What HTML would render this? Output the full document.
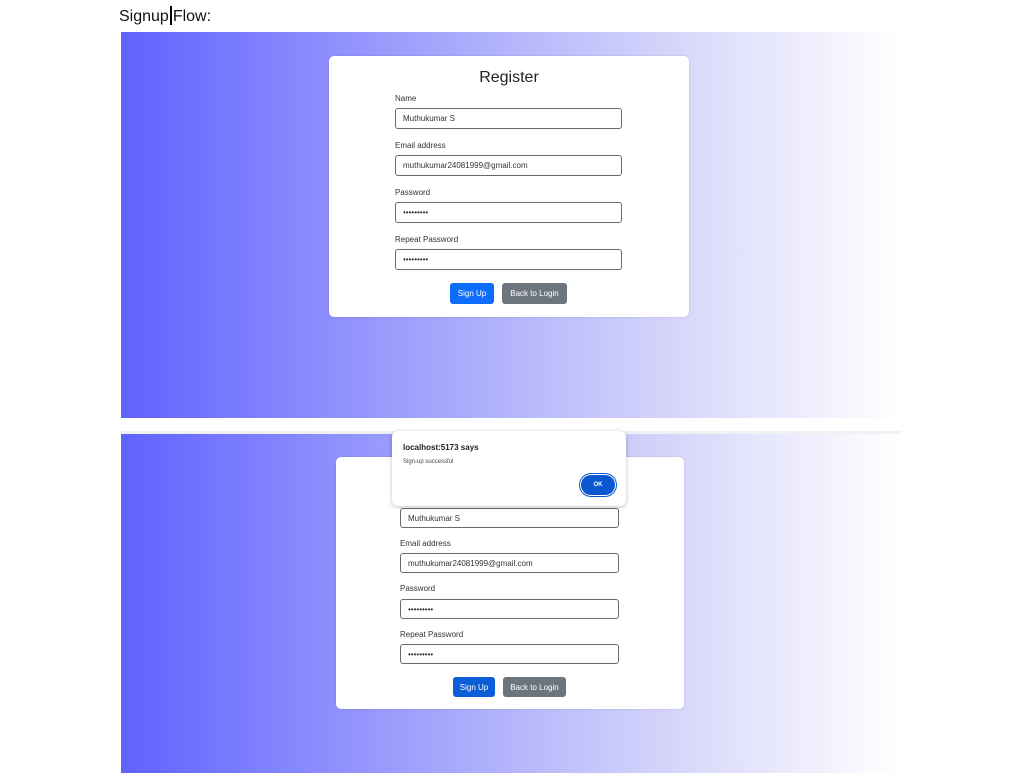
<!DOCTYPE html>
<html><head><style>
body{margin:0;width:1019px;height:773px;background:#fff;position:relative;overflow:hidden;font-family:"Liberation Sans",Arial,sans-serif;}
.abs{position:absolute}
.bg{position:absolute;left:121px;width:780px;background:linear-gradient(90deg,#6062fe 0%,#8a8cfd 25%,#b4b5fb 50%,#dcdcfb 75%,#fff 100%)}
.card{position:absolute;background:#fff;border-radius:5px;box-shadow:0 0 2px rgba(0,0,0,.15)}
.lbl{position:absolute;font-size:8px;color:#333}
.inp{position:absolute;box-sizing:border-box;border:1.5px solid #6b6b6b;border-radius:3px;background:#fff;font-size:8px;color:#333;padding-left:7px;display:flex;align-items:center}
.btn{position:absolute;border-radius:3px;color:#fff;font-size:8px;display:flex;align-items:center;justify-content:center}
</style></head><body>
<div class="abs" style="left:119px;top:6px;font-size:16px;color:#111">Signup<span style="display:inline-block;width:2px;height:19px;background:#000;vertical-align:-4px;margin:0 1px"></span>Flow:</div>

<div class="bg" style="top:32px;height:386px"></div>
<div class="card" style="left:329px;top:56px;width:360px;height:261px"></div>
<div class="abs" style="left:329px;width:360px;top:69px;text-align:center;font-size:16px;color:#222">Register</div>
<div class="lbl" style="left:395px;top:94px">Name</div>
<div class="inp" style="left:395px;top:108px;width:227px;height:21px">Muthukumar S</div>
<div class="lbl" style="left:395px;top:141px">Email address</div>
<div class="inp" style="left:395px;top:155px;width:227px;height:21px">muthukumar24081999@gmail.com</div>
<div class="lbl" style="left:395px;top:188px">Password</div>
<div class="inp" style="left:395px;top:202px;width:227px;height:21px">•••••••••</div>
<div class="lbl" style="left:395px;top:235px">Repeat Password</div>
<div class="inp" style="left:395px;top:249px;width:227px;height:21px">•••••••••</div>
<div class="btn" style="left:450px;top:283px;width:44px;height:21px;background:#0d6efd">Sign Up</div>
<div class="btn" style="left:502px;top:283px;width:65px;height:21px;background:#6c757d">Back to Login</div>

<div class="abs" style="left:121px;top:431px;width:780px;height:3px;background:#f1f1f4"></div>
<div class="bg" style="top:434px;height:339px"></div>
<div class="card" style="left:336px;top:457px;width:348px;height:252px"></div>
<div class="inp" style="left:400px;top:508px;width:219px;height:20px">Muthukumar S</div>
<div class="lbl" style="left:400px;top:539px">Email address</div>
<div class="inp" style="left:400px;top:553px;width:219px;height:20px">muthukumar24081999@gmail.com</div>
<div class="lbl" style="left:400px;top:584px">Password</div>
<div class="inp" style="left:400px;top:599px;width:219px;height:20px">•••••••••</div>
<div class="lbl" style="left:400px;top:630px">Repeat Password</div>
<div class="inp" style="left:400px;top:644px;width:219px;height:20px">•••••••••</div>
<div class="btn" style="left:453px;top:677px;width:42px;height:20px;background:#0b5ed7">Sign Up</div>
<div class="btn" style="left:503px;top:677px;width:63px;height:20px;background:#6c757d">Back to Login</div>

<div class="abs" style="left:392px;top:431px;width:234px;height:75px;background:#fff;border-radius:6px;box-shadow:0 1px 4px rgba(0,0,0,.25)"></div>
<div class="abs" style="left:403px;top:443px;font-size:8px;font-weight:bold;color:#222">localhost:5173 says</div>
<div class="abs" style="left:403px;top:459px;font-size:6px;color:#444">Sign-up successful</div>
<div class="abs" style="left:581px;top:475px;width:34px;height:20px;border-radius:10px;background:#0b57d0;box-shadow:0 0 0 1px #fff,0 0 0 2px #0b57d0;color:#fff;font-size:6px;font-weight:bold;display:flex;align-items:center;justify-content:center">OK</div>
</body></html>
